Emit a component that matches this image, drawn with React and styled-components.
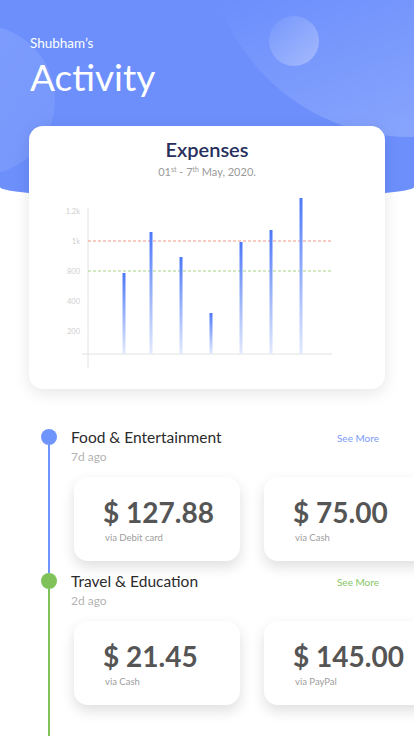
import styled, { createGlobalStyle } from "styled-components";

const GlobalStyle = createGlobalStyle`
  html, body {
    margin: 0;
    padding: 0;
    background: #fff;
    overflow-x: hidden;
  }
  body {
    font-family: "Lato", "Open Sans", sans-serif;
    -webkit-font-smoothing: antialiased;
  }
  * { box-sizing: border-box; }
`;

const bars = [
  { x: 74, top: 75 },
  { x: 101, top: 34 },
  { x: 131, top: 59 },
  { x: 161, top: 115 },
  { x: 191, top: 44 },
  { x: 221, top: 32 },
  { x: 251, top: 0 },
];

const ticks = [
  { label: "1.2k", y: 16 },
  { label: "1k", y: 46 },
  { label: "800", y: 76 },
  { label: "400", y: 106 },
  { label: "200", y: 136 },
];

const groups = [
  {
    title: "Food & Entertainment",
    ago: "7d ago",
    color: "#6f94fb",
    link: "#7b9cf9",
    items: [
      { amount: "$ 127.88", via: "via Debit card" },
      { amount: "$ 75.00", via: "via Cash" },
    ],
  },
  {
    title: "Travel & Education",
    ago: "2d ago",
    color: "#80c25a",
    link: "#86c665",
    items: [
      { amount: "$ 21.45", via: "via Cash" },
      { amount: "$ 145.00", via: "via PayPal" },
    ],
  },
];

const Chart = () => (
  <svg width="290" height="172" viewBox="0 0 290 172">
    <defs>
      <linearGradient id="bar" x1="0" y1="0" x2="0" y2="1">
        <stop offset="0" stopColor="#4c78f7" />
        <stop offset="1" stopColor="#e3eafd" />
      </linearGradient>
    </defs>
    <line x1="38" y1="10" x2="38" y2="170" stroke="#e2e2e2" strokeWidth="1" />
    <line x1="32" y1="156" x2="282" y2="156" stroke="#e2e2e2" strokeWidth="1" />
    <line x1="38" y1="43" x2="282" y2="43" stroke="#ee9a86" strokeWidth="1" strokeDasharray="3 2" />
    <line x1="38" y1="73" x2="282" y2="73" stroke="#a9d384" strokeWidth="1" strokeDasharray="3 2" />
    {ticks.map((t) => (
      <text
        key={t.label}
        x="30"
        y={t.y}
        textAnchor="end"
        fontSize="7.5"
        fill="#cfcfcf"
        fontFamily="Lato, sans-serif"
      >
        {t.label}
      </text>
    ))}
    {bars.map((b) => (
      <rect key={b.x} x={b.x - 1.5} y={b.top} width="3" height={156 - b.top} fill="url(#bar)" />
    ))}
  </svg>
);

const App = () => {
  return (
    <>
      <GlobalStyle />
      <Page>
        <Hero>
          <Bubble $size={150} $left={-95} $top={25} $angle={120} $from={0.14} $to={0.07} />
          <Bubble $size={406} $left={207} $top={-269} $angle={160} $from={0} $to={0.26} $stop={50} />
          <Bubble $size={50} $left={269} $top={16} $angle={135} $from={0.04} $to={0.32} />
          <Owner>Shubham’s</Owner>
          <Heading>Activity</Heading>
        </Hero>

        <ChartCard>
          <CardTitle>Expenses</CardTitle>
          <DateRange>
            01<sup>st</sup> - 7<sup>th</sup> May, 2020.
          </DateRange>
          <ChartArea>
            <Chart />
          </ChartArea>
        </ChartCard>

        <Timeline>
          {groups.map((g, i) => (
            <Group key={g.title} $last={i === groups.length - 1}>
              <Rail>
                <Dot $color={g.color} />
                <Line $color={g.color} />
              </Rail>
              <GroupBody>
                <TitleRow>
                  <GroupTitle>{g.title}</GroupTitle>
                  <SeeMore $color={g.link}>See More</SeeMore>
                </TitleRow>
                <Ago>{g.ago}</Ago>
                <Cards>
                  {g.items.map((it) => (
                    <PayCard key={it.amount}>
                      <Amount>{it.amount}</Amount>
                      <Via>{it.via}</Via>
                    </PayCard>
                  ))}
                </Cards>
              </GroupBody>
            </Group>
          ))}
        </Timeline>
      </Page>
    </>
  );
};

//styled-components//

const Page = styled.div`
  width: 414px;
  height: 736px;
  overflow: hidden;
  background: #fff;
`;

const Hero = styled.header`
  position: relative;
  height: 199px;
  padding: 33px 30px 0;
  background: #6c8ffc;
  border-radius: 0 0 50% 50% / 0 0 12px 12px;
  overflow: hidden;
  color: #fff;
`;

const Bubble = styled.div`
  position: absolute;
  width: ${(p) => p.$size}px;
  height: ${(p) => p.$size}px;
  left: ${(p) => p.$left}px;
  top: ${(p) => p.$top}px;
  border-radius: 50%;
  background: linear-gradient(
    ${(p) => p.$angle}deg,
    rgba(255, 255, 255, ${(p) => p.$from}) ${(p) => p.$stop || 0}%,
    rgba(255, 255, 255, ${(p) => p.$to}) 100%
  );
`;

const Owner = styled.div`
  position: relative;
  font-size: 13.5px;
  line-height: 20px;
`;

const Heading = styled.h1`
  position: relative;
  margin: 1px 0 0;
  font-size: 37px;
  line-height: 46px;
  font-weight: 400;
`;

const ChartCard = styled.section`
  position: relative;
  margin: -73px 29px 0;
  height: 263px;
  background: #fff;
  border-radius: 14px;
  box-shadow: 0 4px 16px rgba(0, 0, 0, 0.1);
  padding-top: 11px;
  text-align: center;
`;

const CardTitle = styled.h2`
  margin: 0;
  font-size: 20px;
  line-height: 24px;
  font-weight: 600;
  color: #272f5c;
`;

const DateRange = styled.div`
  margin-top: 4px;
  font-size: 11px;
  line-height: 14px;
  color: #9a9a9a;

  sup {
    font-size: 7px;
    line-height: 0;
    vertical-align: 4px;
  }
`;

const ChartArea = styled.div`
  display: flex;
  padding: 19px 0 0 21px;
`;

const Timeline = styled.main`
  padding: 40px 0 0 41px;
`;

const Group = styled.div`
  display: flex;
  height: ${(p) => (p.$last ? 170 : 144)}px;
`;

const Rail = styled.div`
  display: flex;
  flex-direction: column;
  align-items: center;
  width: 16px;
  flex-shrink: 0;
`;

const Dot = styled.div`
  width: 16px;
  height: 16px;
  border-radius: 50%;
  background: ${(p) => p.$color};
  flex-shrink: 0;
`;

const Line = styled.div`
  flex: 1;
  width: 1.5px;
  background: ${(p) => p.$color};
`;

const GroupBody = styled.div`
  flex: 1;
  min-width: 0;
  margin-left: 14px;
`;

const TitleRow = styled.div`
  display: flex;
  align-items: center;
  justify-content: space-between;
  margin-right: 35px;
  height: 15px;
`;

const GroupTitle = styled.div`
  font-size: 15.5px;
  line-height: 16px;
  color: #2b2b2b;
`;

const SeeMore = styled.a`
  font-size: 10px;
  padding-top: 3px;
  color: ${(p) => p.$color};
  cursor: pointer;
`;

const Ago = styled.div`
  margin-top: 5px;
  font-size: 12px;
  line-height: 16px;
  color: #b3b3b3;
`;

const Cards = styled.div`
  display: flex;
  gap: 24px;
  margin: 12px 0 0 3px;
`;

const PayCard = styled.div`
  flex-shrink: 0;
  width: 166px;
  height: 84px;
  padding: 18px 0 0 29px;
  background: #fff;
  border-radius: 14px;
  box-shadow: 0 6px 14px rgba(0, 0, 0, 0.13);
`;

const Amount = styled.div`
  font-size: 28px;
  line-height: 34px;
  font-weight: 700;
  color: #555;
  white-space: nowrap;
`;

const Via = styled.div`
  margin: 3px 0 0 2px;
  font-size: 9.5px;
  line-height: 12px;
  color: #9d9d9d;
`;

export default App;
